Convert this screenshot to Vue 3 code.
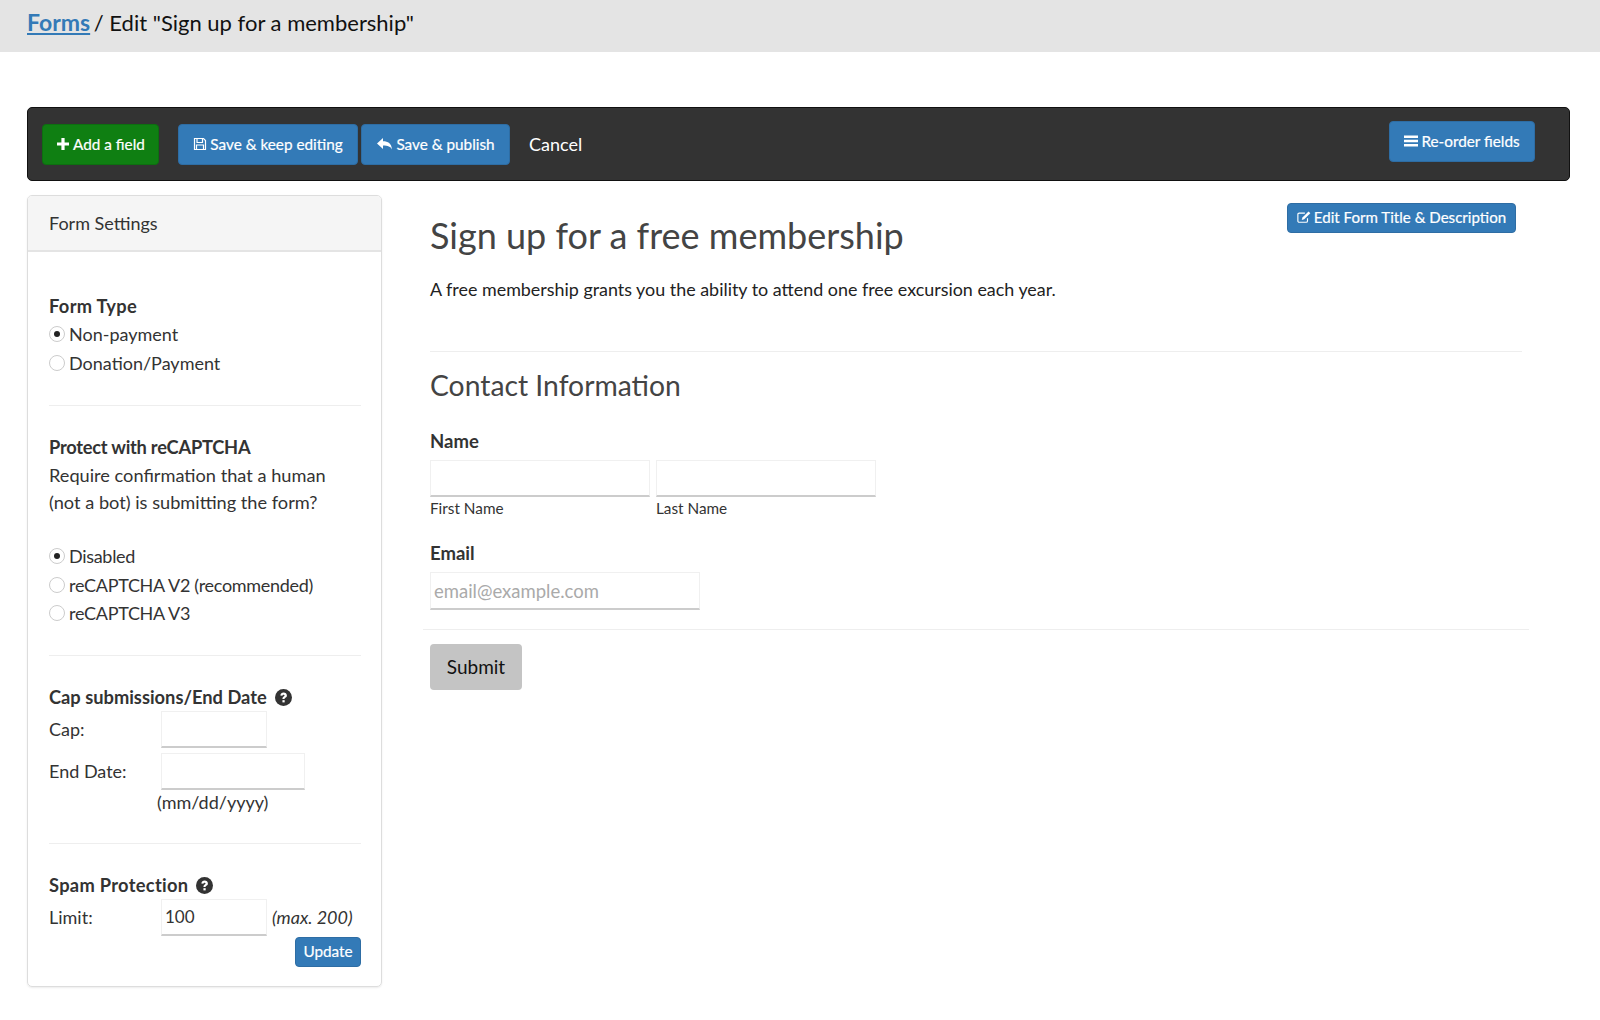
<script setup>
const formTypes = [
  { label: 'Non-payment', on: true },
  { label: 'Donation/Payment', on: false }
]
const captcha = [
  { label: 'Disabled', on: true },
  { label: 'reCAPTCHA V2 (recommended)', on: false },
  { label: 'reCAPTCHA V3', on: false }
]
</script>

<template>
  <div class="page">
    <header class="crumb">
      <a class="crumb-link">Forms</a><span class="crumb-rest"> / Edit "Sign up for a membership"</span>
    </header>

    <div class="toolbar">
      <button class="btn green add">
        <svg class="ic" viewBox="0 0 14 14"><path d="M5.400 1h3.200v4.400H13v3.200H8.600V13H5.400V8.600H1V5.400h4.400z" fill="#fff"/></svg>
        Add a field
      </button>
      <button class="btn blue keep">
        <svg class="ic" viewBox="0 0 14 14" fill="none" stroke="#fff" stroke-width="1.2"><path d="M1.500 1.500h9l2 2v9h-11z"/><path d="M4 1.500v4h5.500v-4M3.500 12.500V8h7v4.500"/></svg>
        Save &amp; keep editing
      </button>
      <button class="btn blue publish">
        <svg class="ic wide" viewBox="0 0 16 14"><path d="M6.500 1v3.200c5 0 8.500 2 9 8.300-1.400-3-4-4-9-4V12L.5 6.500z" fill="#fff"/></svg>
        Save &amp; publish
      </button>
      <span class="cancel">Cancel</span>
      <button class="btn blue reorder">
        <svg class="ic" viewBox="0 0 14 14"><path d="M0 1.500h14v2.400H0zM0 5.800h14v2.400H0zM0 10.100h14v2.400H0z" fill="#fff"/></svg>
        Re-order fields
      </button>
    </div>

    <div class="columns">
      <aside class="panel">
        <div class="panel-head">Form Settings</div>
        <div class="panel-body">
          <section class="block first">
            <div class="title wide-t">Form Type</div>
            <label v-for="r in formTypes" :key="r.label" class="radio">
              <span class="dot" :class="{ on: r.on }"></span>{{ r.label }}
            </label>
          </section>
          <hr class="side-rule rule-a" />
          <section class="block">
            <div class="title tight-t">Protect with reCAPTCHA</div>
            <p class="desc">Require confirmation that a human<br />(not a bot) is submitting the form?</p>
            <label v-for="r in captcha" :key="r.label" class="radio tight-r">
              <span class="dot" :class="{ on: r.on }"></span>{{ r.label }}
            </label>
          </section>
          <hr class="side-rule rule-b" />
          <section class="block">
            <div class="title">
              Cap submissions/End Date
              <svg class="help" viewBox="0 0 16 16"><circle cx="8" cy="8" r="8" fill="#333"/><path d="M5 6.200c.2-1.900 1.500-2.800 3.100-2.800 1.800 0 3.100 1.100 3.100 2.600 0 1.300-.7 1.800-1.500 2.300-.5.3-.7.6-.7 1.200H7c0-1.300.4-1.900 1.200-2.400.5-.3.8-.6.800-1 0-.5-.4-.7-.9-.7-.6 0-1 .3-1.100 1z" fill="#fff"/><rect x="7" y="10.500" width="2.100" height="2.100" fill="#fff"/></svg>
            </div>
            <div class="field-row cap-row">
              <span class="field-label">Cap:</span>
              <input class="input short" />
            </div>
            <div class="field-row date-row">
              <span class="field-label">End Date:</span>
              <input class="input long" />
            </div>
            <div class="hint">(mm/dd/yyyy)</div>
          </section>
          <hr class="side-rule rule-c" />
          <section class="block">
            <div class="title wide-t">
              Spam Protection
              <svg class="help" viewBox="0 0 16 16"><circle cx="8" cy="8" r="8" fill="#333"/><path d="M5 6.200c.2-1.900 1.500-2.800 3.100-2.800 1.800 0 3.100 1.100 3.100 2.600 0 1.300-.7 1.800-1.500 2.300-.5.3-.7.6-.7 1.200H7c0-1.300.4-1.900 1.200-2.400.5-.3.8-.6.800-1 0-.5-.4-.7-.9-.7-.6 0-1 .3-1.100 1z" fill="#fff"/><rect x="7" y="10.500" width="2.100" height="2.100" fill="#fff"/></svg>
            </div>
            <div class="field-row limit-row">
              <span class="field-label">Limit:</span>
              <input class="input short" value="100" />
              <em class="max">(max. 200)</em>
            </div>
            <div class="update-wrap"><button class="btn blue update">Update</button></div>
          </section>
        </div>
      </aside>

      <main class="main">
        <div class="title-row">
          <h1>Sign up for a free membership</h1>
          <button class="btn blue edit">
            <svg class="ic" viewBox="0 0 16 14" fill="none"><path d="M12 8.500v3a1.500 1.500 0 0 1-1.500 1.500h-8A1.500 1.500 0 0 1 1 11.500v-7.500A1.500 1.500 0 0 1 2.500 2.500H9" stroke="#fff" stroke-width="1.300"/><path d="M13.200.6l2 2-7 7-2.800.8.800-2.800z" fill="#fff"/></svg>
            Edit Form Title &amp; Description
          </button>
        </div>
        <p class="lead">A free membership grants you the ability to attend one free excursion each year.</p>
        <hr class="main-rule" />
        <h2>Contact Information</h2>
        <div class="f-label name-label">Name</div>
        <div class="name-row">
          <div class="name-col">
            <input class="input name" />
            <small>First Name</small>
          </div>
          <div class="name-col">
            <input class="input name" />
            <small>Last Name</small>
          </div>
        </div>
        <div class="f-label email-label">Email</div>
        <input class="input email" placeholder="email@example.com" />
        <hr class="foot-rule" />
        <button class="submit">Submit</button>
      </main>
    </div>
  </div>
</template>

<style>
html, body { margin: 0; background: #fff; }
</style>

<style scoped>
.page {
  width: 1600px;
  height: 1020px;
  overflow: hidden;
  font-family: Lato, "Liberation Sans", sans-serif;
  font-size: 18px;
  color: #333;
  box-sizing: border-box;
}
.crumb {
  height: 52px;
  background: #e4e4e4;
  box-sizing: border-box;
  padding: 8px 0 0 27px;
  font-size: 22px;
  line-height: 29px;
  color: #111;
}
.crumb-link { color: #337ab7; font-weight: 700; font-size: 23px; text-decoration: underline; }
.crumb-rest { margin-left: -2px; }
.toolbar {
  margin: 55px 30px 0 27px;
  height: 74px;
  background: #333;
  border: 1px solid #111;
  border-radius: 5px;
  box-sizing: border-box;
  display: flex;
  align-items: center;
  padding: 0 34px 0 14px;
}
.btn {
  font-family: inherit;
  color: #fff;
  border: 1px solid transparent;
  border-radius: 4px;
  font-size: 15.300px;
  -webkit-text-stroke: .2px #fff;
  box-sizing: border-box;
  display: inline-flex;
  align-items: center;
  justify-content: center;
  gap: 3px;
  padding: 0 0 2px;
  white-space: nowrap;
}
.blue { background: #337ab7; border-color: #2e6da4; }
.green { background: #0f7f12; border-color: #0d6f10; }
.ic { width: 14px; height: 14px; flex: none; }
.ic.wide { width: 17px; }
.add { width: 117px; height: 41px; margin-top: 1px; }
.keep { width: 180px; height: 41px; margin: 1px 0 0 19px; }
.publish { width: 149px; height: 41px; margin: 1px 0 0 3px; }
.cancel { color: #fff; font-size: 18px; margin: 0 0 1px 19px; }
.reorder { width: 146px; height: 41px; margin: -5px 0 0 auto; }
.columns { display: flex; margin: 14px 0 0 27px; align-items: flex-start; }
.panel {
  width: 355px;
  height: 792px;
  flex: none;
  box-sizing: border-box;
  border: 1px solid #ddd;
  border-radius: 5px;
  box-shadow: 0 1px 2px rgba(0,0,0,.08);
}
.panel-head {
  height: 56px;
  box-sizing: border-box;
  background: #f5f5f5;
  border-bottom: 2px solid #e4e4e4;
  border-radius: 4px 4px 0 0;
  padding: 0 21px;
  line-height: 54px;
  font-size: 18px;
}
.panel-body { padding: 41px 20px 0 21px; font-size: 18px; }
.block { margin: 0; }
.title { font-weight: 700; font-size: 18.300px; line-height: 27px; display: flex; align-items: center; gap: 8px; }
.wide-t { letter-spacing: .3px; }
.tight-t { letter-spacing: -.25px; }
.radio { display: flex; align-items: center; height: 28.500px; }
.tight-r { letter-spacing: -.3px; }
.dot {
  width: 16px;
  height: 16px;
  box-sizing: border-box;
  border: 1px solid #ccc;
  border-radius: 50%;
  margin-right: 4px;
  background: #fff;
  display: inline-flex;
  align-items: center;
  justify-content: center;
}
.dot.on::after { content: ""; width: 6px; height: 6px; border-radius: 50%; background: #222; }
.side-rule { border: 0; border-top: 1px solid #eee; margin: 0; }
.rule-a { margin: 28px 0 28px; }
.rule-b { margin: 27px 0 28px; }
.rule-c { margin: 28px 0 28px; }
.desc { margin: 1px 0 26px; line-height: 27px; font-size: 18.200px; }
.help { width: 17px; height: 17px; flex: none; }
.input {
  font-family: inherit;
  font-size: 17px;
  color: #333;
  box-sizing: border-box;
  height: 37px;
  border: 1px solid #f0f0f0;
  border-bottom: 2px solid #ccc;
  border-radius: 0;
  padding: 0 3px;
  background: #fff;
  outline: none;
  display: block;
}
.input::placeholder { color: #aaa; }
.field-row { display: flex; align-items: center; }
.field-label { width: 112px; flex: none; }
.short { width: 106px; }
.long { width: 144px; }
.cap-row { margin-top: 0; }
.date-row { margin-top: 5px; }
.hint { margin: -1px 0 0 108px; line-height: 26px; }
.limit-row { margin-top: 0; }
.max { margin-left: 5px; font-size: 18px; white-space: nowrap; }
.update-wrap { display: flex; justify-content: flex-end; margin-top: 1px; }
.update { width: 66px; height: 30px; }
.main { margin-left: 48px; width: 1092px; }
.title-row { position: relative; padding-top: 14px; }
h1 { margin: 0; font-weight: 400; font-size: 36px; line-height: 52px; color: #444; }
.edit { position: absolute; top: 8px; right: 6px; width: 229px; height: 30px; font-size: 15.100px; }
.lead { margin: 15px 0 0; font-size: 17.900px; line-height: 26px; color: #222; }
.main-rule { border: 0; border-top: 1px solid #eee; margin: 49px 0 0; }
h2 { margin: 13px 0 0; font-weight: 400; font-size: 28.300px; line-height: 40px; color: #444; }
.f-label { font-weight: 700; font-size: 18.500px; line-height: 26px; }
.name-label { margin-top: 23px; }
.name-row { display: flex; gap: 6px; margin-top: 6px; }
.name { width: 220px; }
small { display: block; font-size: 15.300px; line-height: 23px; }
.email-label { margin-top: 20px; }
.email { width: 270px; height: 38px; margin-top: 6px; font-size: 18.500px; }
.foot-rule { border: 0; border-top: 1px solid #eee; margin: 19px -7px 14px; }
.submit {
  display: block;
  width: 92px;
  height: 46px;
  border: 0;
  border-radius: 4px;
  background: #c4c4c4;
  color: #111;
  font-family: inherit;
  font-size: 19px;
  padding: 0 0 2px;
}
</style>
